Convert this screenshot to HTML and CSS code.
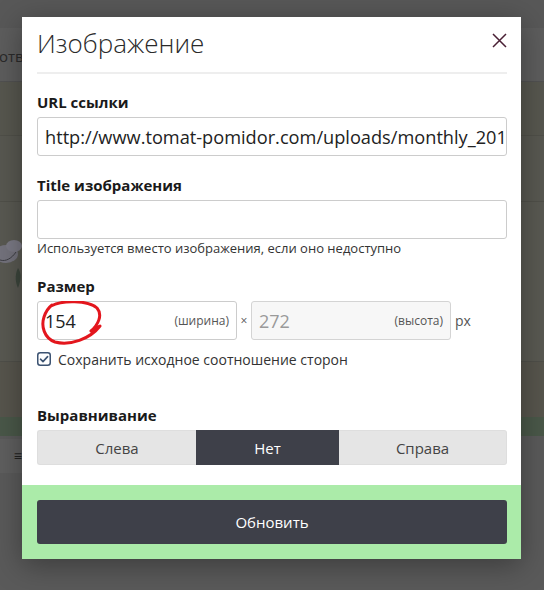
FILE: index.html
```html
<!DOCTYPE html>
<html lang="ru">
<head>
<meta charset="utf-8">
<title>Изображение</title>
<link rel="stylesheet" href="styles.css">
</head>
<body>
<div class="page">
  <div class="band b0"></div>
  <div class="band b1"><span class="bg-text">отве</span></div>
  <div class="band b2"></div>
  <div class="band b3"></div>
  <div class="band b4">
    <svg class="flower" width="22" height="80" viewBox="0 0 22 80">
      <ellipse cx="6" cy="26" rx="12" ry="9" fill="#74737d"/>
      <ellipse cx="14" cy="18" rx="8" ry="6" fill="#7b7a85"/>
      <path d="M0 32 C6 34 12 30 16 24" stroke="#3e3e44" fill="none" stroke-width="1"/>
      <path d="M18 40 C14 48 16 56 18 60 C21 52 22 46 18 40Z" fill="#3c463c"/>
    </svg>
  </div>
  <div class="band b5"></div>
  <div class="band b6"></div>
  <div class="band b7"><div class="side-box"><span class="side-icon">≡</span></div></div>
</div>

<div class="modal">
  <div class="modal-header">
    <h1 class="modal-title">Изображение</h1>
    <svg class="close" width="15" height="15" viewBox="0 0 15 15">
      <path d="M1 1 L14 14 M14 1 L1 14" stroke="#4a2035" stroke-width="1.5" fill="none"/>
    </svg>
  </div>
  <div class="modal-body">
    <div class="group">
      <div class="label">URL ссылки</div>
      <div class="field"><span class="value url">http://www.tomat-pomidor.com/uploads/monthly_201</span></div>
    </div>
    <div class="group g-title">
      <div class="label">Title изображения</div>
      <div class="field"></div>
      <div class="help">Используется вместо изображения, если оно недоступно</div>
    </div>
    <div class="group g-size">
      <div class="label">Размер</div>
      <div class="size-row">
        <div class="field size-field">
          <span class="value">154</span>
          <span class="suffix">(ширина)</span>
          <svg class="scribble" width="66" height="50" viewBox="0 0 66 50">
            <path d="M11 5 C22 -1 48 -1 57 7 C63 14 58 24 51 30 L60 25 C50 38 30 45 15 41 C4 37 1 25 4 16 C6 10 8 7 12 4" stroke="#e3161d" stroke-width="3" fill="none" stroke-linecap="round" stroke-linejoin="round"/>
          </svg>
        </div>
        <span class="times">×</span>
        <div class="field size-field disabled">
          <span class="value">272</span>
          <span class="suffix">(высота)</span>
        </div>
        <span class="px">px</span>
      </div>
      <div class="check-row">
        <svg class="checkbox" width="14" height="14" viewBox="0 0 14 14">
          <rect x="0.75" y="0.75" width="12.5" height="12.5" rx="2.5" fill="#fff" stroke="#3c5372" stroke-width="1.5"/>
          <path d="M3.5 7.2 L6 9.6 L10.6 4.6" stroke="#3c5372" stroke-width="1.6" fill="none" stroke-linecap="round" stroke-linejoin="round"/>
        </svg>
        <span>Сохранить исходное соотношение сторон</span>
      </div>
    </div>
    <div class="group g-align">
      <div class="label">Выравнивание</div>
      <div class="segments">
        <div class="seg">Слева</div>
        <div class="seg active">Нет</div>
        <div class="seg">Справа</div>
      </div>
    </div>
  </div>
  <div class="modal-footer">
    <div class="btn">Обновить</div>
  </div>
</div>
</body>
</html>
```
FILE: styles.css
```css
* { box-sizing: border-box; }
html, body { margin: 0; padding: 0; }
body {
  width: 544px;
  height: 590px;
  overflow: hidden;
  position: relative;
  background: #5b5b5b;
  font-family: "Open Sans", "Liberation Sans", sans-serif;
  color: #222;
}
.page { display: flex; flex-direction: column; height: 590px; }
.band { flex: none; }
.b0 { height: 28px; background: #585858; }
.b1 { height: 54px; background: #5d5d5d; border-bottom: 1px solid #515151; display: flex; align-items: center; }
.bg-text { font-size: 15px; color: #2a2a2a; margin-left: -1px; padding-top: 2px; white-space: nowrap; }
.b2 { height: 54px; background: #57574f; border-bottom: 1px solid #505049; }
.b3 { height: 66px; background: #585851; border-bottom: 1px solid #505049; }
.b4 { height: 160px; background: #595952; border-bottom: 1px solid #4f4f49; padding-top: 26px; }
.flower { display: block; }
.b5 { height: 55px; background: #57554d; }
.b6 { height: 19px; background: #4a5849; }
.b7 { flex: 1; background: #5a5a5a; }
.side-box { width: 22px; height: 34px; margin-top: 3px; background: #5f5f5f; display: flex; justify-content: flex-end; align-items: center; }
.side-icon { color: #222; font-size: 14px; line-height: 14px; }

.modal {
  position: absolute;
  left: 22px;
  top: 17px;
  width: 499px;
  background: #fff;
  box-shadow: 0 6px 28px rgba(0,0,0,0.35);
}
.modal-header {
  margin: 0 14px 0 15px;
  padding: 8px 0 11px;
  border-bottom: 2px solid #eeeeee;
  display: flex;
  justify-content: space-between;
  align-items: flex-start;
}
.modal-title {
  margin: 0;
  font-size: 26px;
  font-weight: 300;
  line-height: 36px;
  color: #2a2a2a;
}
.close { margin-top: 8px; flex: none; }

.modal-body { padding: 18px 14px 20px 15px; }
.group { display: flex; flex-direction: column; }
.label {
  font-size: 15px;
  font-weight: 700;
  line-height: 20px;
  color: #1a1a1a;
  margin-bottom: 5px;
}
.field {
  height: 39px;
  border: 1px solid #cccccc;
  border-radius: 3px;
  background: #fff;
  display: flex;
  align-items: center;
  padding: 0 7px;
  position: relative;
}
.value { font-size: 18px; color: #222; white-space: nowrap; }
.url { font-size: 18.2px; }
.g-title { margin-top: 19px; }
.help { font-size: 13px; line-height: 18px; color: #333; }
.g-size { margin-top: 19px; }
.size-row { display: flex; align-items: center; }
.size-field { width: 200px; justify-content: space-between; }
.suffix { font-size: 12px; color: #555; }
.times { font-size: 12px; color: #555; width: 14px; text-align: center; }
.disabled { background: #f7f7f7; border-color: #d4d4d4; }
.disabled .value { color: #9a9a9a; }
.px { font-size: 14px; color: #555; margin-left: 4px; }
.scribble { position: absolute; left: 2px; top: -1px; }
.check-row { display: flex; align-items: center; margin-top: 9px; height: 20px; font-size: 14px; color: #333; }
.checkbox { margin-right: 7px; flex: none; }
.g-align { margin-top: 36px; }
.segments {
  display: grid;
  grid-template-columns: 159px 143px 1fr;
  height: 35px;
}
.seg {
  display: flex;
  align-items: center;
  justify-content: center;
  background: #e5e5e5;
  color: #444;
  font-size: 15px;
  border: 1px solid #dedede;
}
.seg:first-child { border-radius: 3px 0 0 3px; border-right: none; }
.seg:last-child { border-radius: 0 3px 3px 0; border-left: none; }
.seg.active { background: #3e4049; border-color: #3e4049; color: #fff; }

.modal-footer {
  background: #abeba9;
  padding: 15px 14px 15px 15px;
}
.btn {
  height: 44px;
  border-radius: 3px;
  background: #3e4049;
  color: #fff;
  font-size: 15px;
  display: flex;
  align-items: center;
  justify-content: center;
}
```
